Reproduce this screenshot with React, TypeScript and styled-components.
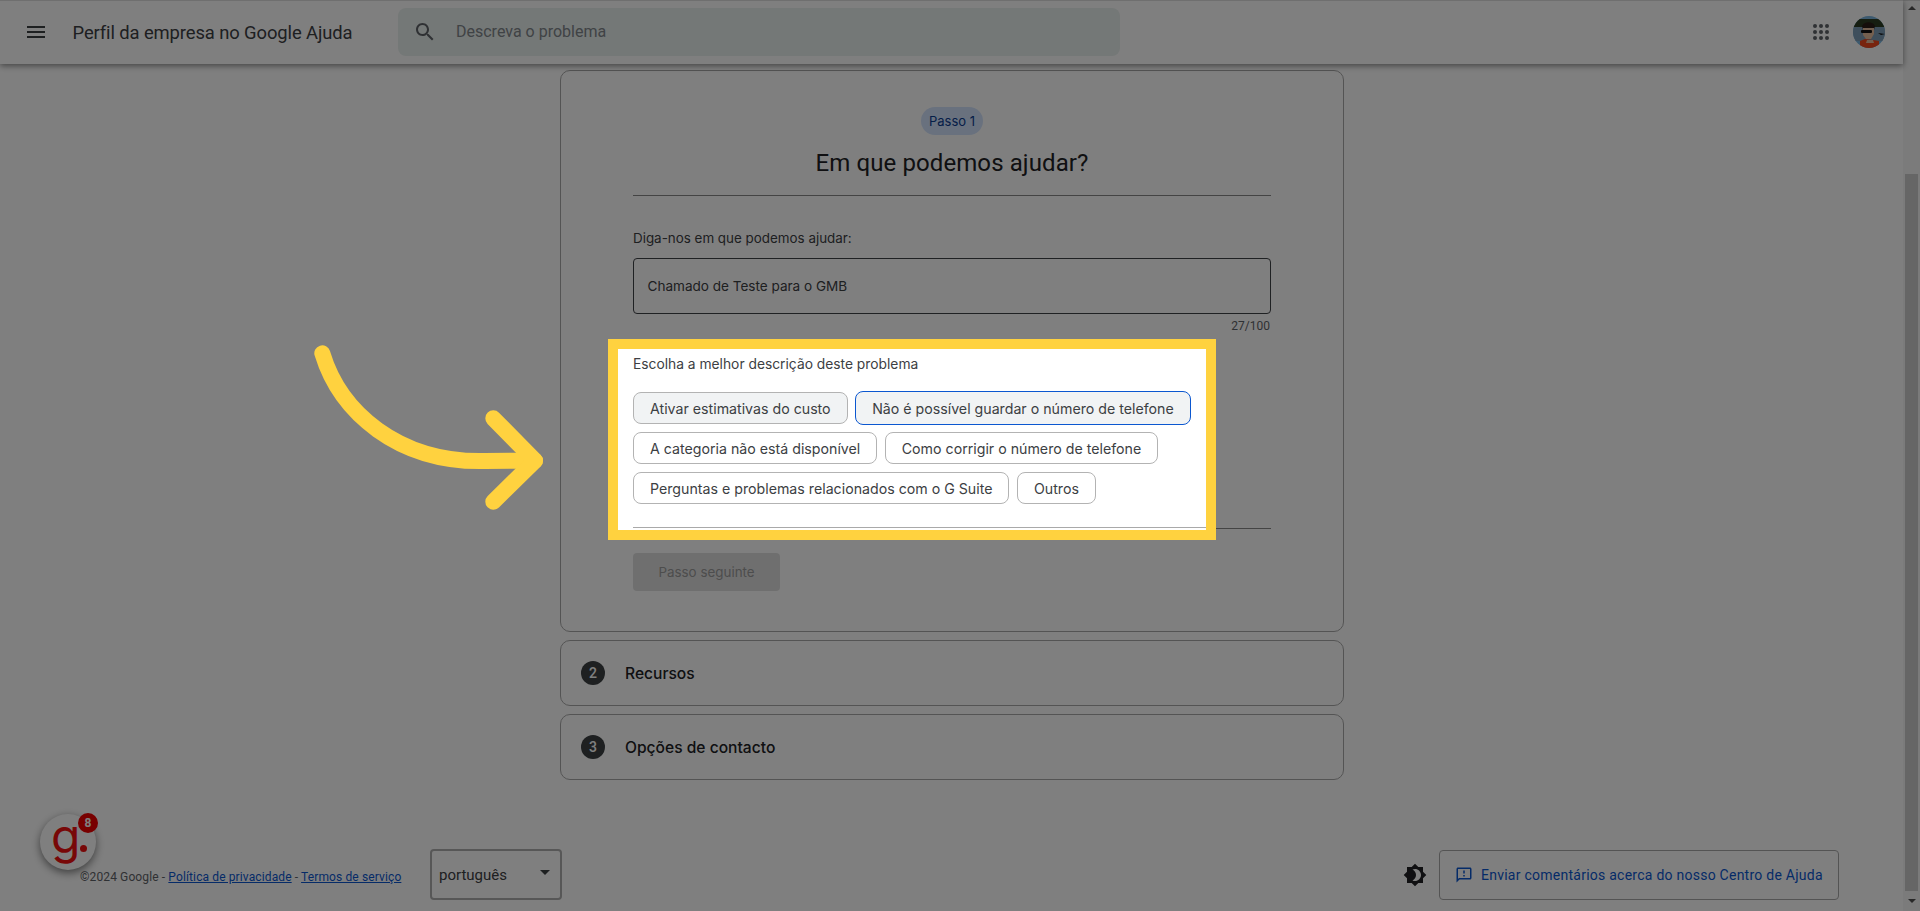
import React from 'react';
import styled, { createGlobalStyle } from 'styled-components';

const Global = createGlobalStyle`
  html, body { margin: 0; padding: 0; height: 911px; overflow: hidden; background: #fff; }
  * { box-sizing: border-box; }
  body { font-family: Roboto, "Liberation Sans", sans-serif; color: #202124; }
`;

const Page = styled.div`
  position: relative;
  width: 1920px;
  height: 911px;
  display: flex;
  overflow: hidden;
`;
const Dim = styled.div`
  position: absolute;
  inset: 0;
  z-index: 5;
  background: rgba(0, 0, 0, 0.5);
  box-shadow: inset 0 1px 0 rgba(0, 0, 0, 0.12);
`;
const Main = styled.div`
  width: 1903px;
  display: flex;
  flex-direction: column;
  background: #fff;
`;
const TopBar = styled.header`
  position: relative;
  z-index: 2;
  height: 64px;
  display: flex;
  align-items: center;
  padding: 0 18px 0 24px;
  background: #fff;
  box-shadow: 0 2px 6px rgba(0, 0, 0, 0.45);
`;
const MenuIcon = styled.svg`
  width: 24px;
  height: 24px;
  fill: #3c4043;
`;
const Brand = styled.div`
  margin-left: 24.5px;
  width: 325.5px;
  font-size: 18.4px;
  font-weight: 400;
  color: #3c4043;
  letter-spacing: -0.1px;
`;
const Search = styled.div`
  width: 722px;
  height: 48px;
  display: flex;
  align-items: center;
  padding-left: 15px;
  gap: 19px;
  background: #e9f0ee;
  border-radius: 8px;
`;
const SearchIcon = styled.svg`
  width: 24px;
  height: 24px;
  fill: #5f6368;
  flex: none;
`;
const Placeholder = styled.span`
  font-size: 16px;
  color: #80868b;
  position: relative;
  top: -1px;
`;
const Grow = styled.div`
  flex: 1;
`;
const Apps = styled.svg`
  width: 16px;
  height: 16px;
  fill: #5f6368;
  margin-right: 24px;
`;
const Avatar = styled.svg`
  width: 32px;
  height: 32px;
  border-radius: 50%;
  flex: none;
`;
const Column = styled.main`
  flex: 1;
  display: flex;
  flex-direction: column;
  align-items: center;
  padding: 6px 0 0 1px;
  gap: 8px;
`;
const Card = styled.section`
  width: 784px;
  height: 562px;
  border: 1px solid #a9a9a9;
  border-radius: 10px;
  padding: 36px 72px 0;
  display: flex;
  flex-direction: column;
`;
const Pill = styled.div`
  align-self: center;
  height: 28px;
  width: 62.5px;
  display: flex;
  align-items: center;
  justify-content: center;
  border-radius: 14px;
  background: #d3e3fd;
  color: #0b3d91;
  font: 400 13px Inter, sans-serif;
`;
const Title = styled.h1`
  margin: 12px 0 0;
  font-size: 24px;
  line-height: 32px;
  font-weight: 400;
  text-align: center;
  color: #202124;
  letter-spacing: 0.1px;
`;
const Rule = styled.hr`
  margin: 16px 0 0;
  border: 0;
  height: 1px;
  width: 100%;
  background: #888;
  flex: none;
`;
const FieldLabel = styled.label`
  margin-top: 32px;
  font: 400 13.4px/20px Inter, sans-serif;
  color: #3c4043;
`;
const Field = styled.div`
  margin-top: 10px;
  height: 56px;
  border: 1px solid #3f4246;
  border-radius: 4px;
  display: flex;
  align-items: center;
  padding-left: 13.5px;
  font: 400 13.55px Inter, sans-serif;
  color: #3c4043;
`;
const Counter = styled.div`
  margin-top: 4px;
  text-align: right;
  font-size: 12px;
  line-height: 16px;
  color: #5f6368;
  padding-right: 1px;
`;
const Spot = styled.div`
  position: relative;
  z-index: 10;
  margin: 15px 0 0 -15.5px;
  width: 588px;
  height: 181px;
  padding: 5px 0 0 15.5px;
  background: #fff;
  box-shadow: 0 0 0 10px #ffd23f;
  flex: none;
  display: flex;
  flex-direction: column;
`;
const SpotLabel = styled.div`
  font: 400 13.8px/20px Inter, sans-serif;
  color: #3c4043;
`;
const Chips = styled.div`
  margin-top: 18px;
  display: flex;
  flex-wrap: wrap;
  align-items: center;
  gap: 8px 7.5px;
`;
const Chip = styled.button<{ $state?: 'idle' | 'soft' | 'active' }>`
  height: ${p => (p.$state === 'active' ? '34px' : '32px')};
  margin: ${p => (p.$state === 'active' ? '-1px 0' : '0')};
  padding: 0 16px;
  font: 400 14.2px Inter, sans-serif;
  color: #3c4043;
  border-radius: 8px;
  white-space: nowrap;
  border: 1px solid ${p => (p.$state === 'active' ? '#0b57d0' : '#b3b3b3')};
  background: ${p => (p.$state === 'idle' || !p.$state ? '#fff' : '#f1f3f4')};
`;
const SpotRule = styled.hr`
  margin: auto 0 2px;
  border: 0;
  height: 1px;
  background: #a9a9a9;
  flex: none;
`;
const TailRule = styled(Rule)`
  margin: -2px 0 0;
`;
const NextButton = styled.div`
  margin-top: 24px;
  width: 147px;
  height: 38px;
  border-radius: 4px;
  background: #dfdfdf;
  color: #9a9a9a;
  font: 400 13.4px Inter, sans-serif;
  display: flex;
  align-items: center;
  justify-content: center;
`;
const StepRow = styled.section`
  width: 784px;
  height: 66px;
  border: 1px solid #a9a9a9;
  border-radius: 10px;
  display: flex;
  align-items: center;
  padding-left: 20px;
  gap: 20px;
`;
const StepDot = styled.span`
  width: 24px;
  height: 24px;
  border-radius: 50%;
  background: #3c4043;
  color: #fff;
  font-size: 14px;
  font-weight: 500;
  display: flex;
  align-items: center;
  justify-content: center;
`;
const StepName = styled.span`
  font: 450 15.6px Inter, sans-serif;
  color: #202124;
`;
const Footer = styled.footer`
  height: 73px;
  flex: none;
  margin-top: auto;
  display: flex;
  align-items: center;
  padding-left: 80px;
  padding-right: 64px;
  font-size: 12px;
  color: #5f6368;
`;
const Legal = styled.div`
  width: 350px;
  position: relative;
  top: 2px;
  letter-spacing: 0.12px;
  a { color: #0b57d0; text-decoration: underline; }
`;
const Lang = styled.div`
  width: 132px;
  height: 51px;
  border: 2px solid #aeaeae;
  border-radius: 4px;
  display: flex;
  align-items: center;
  justify-content: space-between;
  padding: 0 10px 0 7px;
  font-size: 15px;
  color: #3c4043;
`;
const Caret = styled.span`
  width: 0;
  height: 0;
  border-left: 5px solid transparent;
  border-right: 5px solid transparent;
  border-top: 5px solid #3c4043;
  margin-top: -4px;
`;
const ThemeIcon = styled.svg`
  width: 24px;
  height: 24px;
  fill: #202124;
  margin-right: 12px;
`;
const Feedback = styled.div`
  width: 400px;
  height: 50px;
  border: 1px solid #a9a9a9;
  border-radius: 4px;
  display: flex;
  align-items: center;
  padding-left: 15px;
  gap: 8px;
  color: #0b57d0;
  font-size: 14px;
  letter-spacing: 0.25px;
`;
const FeedbackIcon = styled.svg`
  width: 18px;
  height: 18px;
  fill: #0b57d0;
`;
const Bar = styled.div`
  width: 17px;
  height: 911px;
  background: #f6f6f6;
  display: flex;
  flex-direction: column;
  align-items: center;
`;
const BarUp = styled.span`
  margin-top: 6px;
  width: 0;
  height: 0;
  border-left: 4px solid transparent;
  border-right: 4px solid transparent;
  border-bottom: 4px solid #505050;
`;
const BarThumb = styled.div`
  margin-top: 164px;
  width: 13px;
  height: 717px;
  background: #cdcdcd;
`;
const BarDown = styled.span`
  margin-top: 8px;
  width: 0;
  height: 0;
  border-left: 4px solid transparent;
  border-right: 4px solid transparent;
  border-top: 4px solid #505050;
`;
const Arrow = styled.svg`
  position: absolute;
  z-index: 10;
  left: 300px;
  top: 330px;
  width: 250px;
  height: 190px;
  fill: none;
  stroke: #ffd23f;
  stroke-width: 16px;
  stroke-linecap: round;
  stroke-linejoin: round;
`;
const Bubble = styled.div`
  position: absolute;
  z-index: 3;
  left: 40px;
  top: 814px;
  width: 56px;
  height: 56px;
  border-radius: 50%;
  background: #fff;
  box-shadow: 0 3px 8px rgba(0, 0, 0, 0.5);
  display: flex;
  align-items: center;
  justify-content: flex-start;
  padding: 0 0 12px 11px;
  color: #f01010;
  font: 400 48px/56px Inter, sans-serif;
`;
const BubbleDot = styled.span`
  position: absolute;
  left: 40px;
  top: 31px;
  width: 7px;
  height: 7px;
  border-radius: 50%;
  background: #f01010;
`;
const BubbleBadge = styled.span`
  position: absolute;
  left: 38px;
  top: -1px;
  width: 20px;
  height: 20px;
  border-radius: 50%;
  background: #f00000;
  color: #fff;
  font: 700 12px/20px Roboto, sans-serif;
  text-align: center;
`;

export default function App() {
  return (
    <Page>
      <Global />
      <Main>
        <TopBar>
          <MenuIcon viewBox="0 0 24 24"><path d="M3 18h18v-2H3v2zm0-5h18v-2H3v2zm0-7v2h18V6H3z" /></MenuIcon>
          <Brand>Perfil da empresa no Google Ajuda</Brand>
          <Search>
            <SearchIcon viewBox="0 0 24 24"><path d="M15.5 14h-.79l-.28-.27C15.41 12.59 16 11.11 16 9.5 16 5.91 13.09 3 9.5 3S3 5.91 3 9.5 5.91 16 9.5 16c1.61 0 3.09-.59 4.23-1.57l.27.28v.79l5 4.99L20.49 19l-4.99-5zm-6 0C7.01 14 5 11.99 5 9.5S7.01 5 9.5 5 14 7.01 14 9.5 11.99 14 9.5 14z" /></SearchIcon>
            <Placeholder>Descreva o problema</Placeholder>
          </Search>
          <Grow />
          <Apps viewBox="0 0 16 16">
            {[2, 8, 14].flatMap(y => [2, 8, 14].map(x => <circle key={`${x}-${y}`} cx={x} cy={y} r="2" />))}
          </Apps>
          <Avatar viewBox="0 0 32 32">
            <rect width="32" height="32" fill="#7ab4de" />
            <rect y="3" width="32" height="8" fill="#2c3d22" />
            <rect y="11" width="32" height="14" fill="#7f9fb8" />
            <path d="M9 10c2-5 11-5 13 0l-1 4H10z" fill="#2a1c16" />
            <path d="M10 12h11v6l-3 5h-5l-3-4z" fill="#e6bf9f" />
            <rect x="8" y="14" width="11" height="3" rx="1" fill="#111" />
            <path d="M7 32v-7l5-2 8 1 6 1v7z" fill="#f0481c" />
            <path d="M14 24l6 0 1 3h-8z" fill="#e6bf9f" />
            <path d="M25 17l7 1-4 1z" fill="#111" />
          </Avatar>
        </TopBar>
        <Column>
          <Card>
            <Pill>Passo 1</Pill>
            <Title>Em que podemos ajudar?</Title>
            <Rule />
            <FieldLabel>Diga-nos em que podemos ajudar:</FieldLabel>
            <Field>Chamado de Teste para o GMB</Field>
            <Counter>27/100</Counter>
            <Spot>
              <SpotLabel>Escolha a melhor descrição deste problema</SpotLabel>
              <Chips>
                <Chip $state="soft">Ativar estimativas do custo</Chip>
                <Chip $state="active">Não é possível guardar o número de telefone</Chip>
                <Chip>A categoria não está disponível</Chip>
                <Chip>Como corrigir o número de telefone</Chip>
                <Chip>Perguntas e problemas relacionados com o G Suite</Chip>
                <Chip>Outros</Chip>
              </Chips>
              <SpotRule />
            </Spot>
            <TailRule />
            <NextButton>Passo seguinte</NextButton>
          </Card>
          <StepRow><StepDot>2</StepDot><StepName>Recursos</StepName></StepRow>
          <StepRow><StepDot>3</StepDot><StepName>Opções de contacto</StepName></StepRow>
        </Column>
        <Footer>
          <Legal>©2024 Google - <a>Política de privacidade</a> - <a>Termos de serviço</a></Legal>
          <Lang>português<Caret /></Lang>
          <Grow />
          <ThemeIcon viewBox="0 0 24 24"><path d="M20 8.69V4h-4.69L12 .69 8.69 4H4v4.69L.69 12 4 15.31V20h4.69L12 23.31 15.31 20H20v-4.69L23.31 12 20 8.69zM12 18c-.89 0-1.74-.2-2.5-.55C11.56 16.5 13 14.42 13 12s-1.44-4.5-3.5-5.45C10.26 6.2 11.11 6 12 6c3.31 0 6 2.69 6 6s-2.69 6-6 6z" /></ThemeIcon>
          <Feedback>
            <FeedbackIcon viewBox="0 0 24 24"><path d="M20 2H4c-1.1 0-2 .9-2 2v18l4-4h14c1.1 0 2-.9 2-2V4c0-1.1-.9-2-2-2zm0 14H5.17L4 17.17V4h16v12zM11 12h2v2h-2zm0-6h2v4h-2z" /></FeedbackIcon>
            Enviar comentários acerca do nosso Centro de Ajuda
          </Feedback>
        </Footer>
      </Main>
      <Bar>
        <BarUp />
        <BarThumb />
        <BarDown />
      </Bar>
      <Bubble>
        g
        <BubbleDot />
        <BubbleBadge>8</BubbleBadge>
      </Bubble>
      <Dim />
      <Arrow viewBox="0 0 250 190">
        <path d="M22.3 23.3C40 82 98 133 185 131L235 130.7" />
        <path d="M193.3 88.3L235 130.7L193.3 171.7" />
      </Arrow>
    </Page>
  );
}
